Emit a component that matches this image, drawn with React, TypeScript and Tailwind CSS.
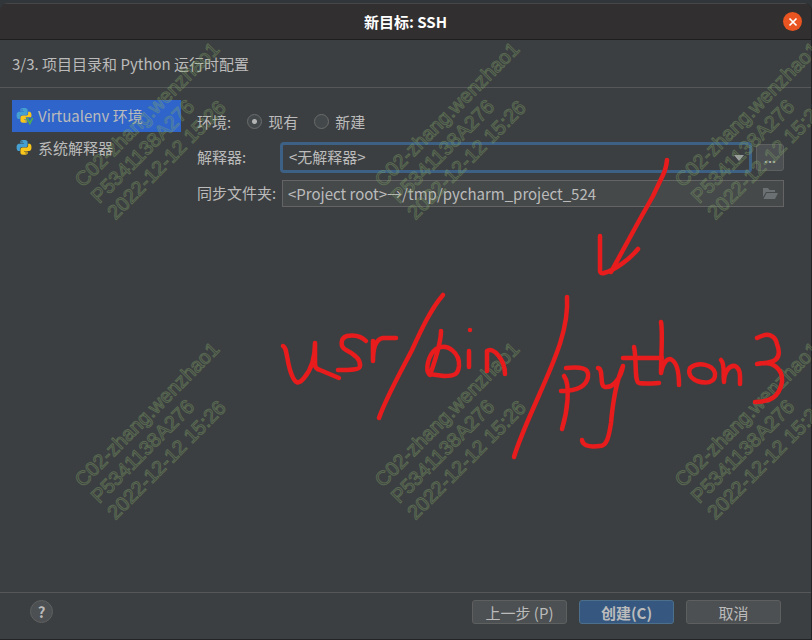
import type { ReactNode } from "react";

const PY_BLUE =
  "M14.25.18l.9.2.73.26.59.3.45.32.34.34.25.34.16.33.1.3.04.26.02.2-.01.13V8.5l-.05.63-.13.55-.21.46-.26.38-.3.31-.33.25-.35.19-.35.14-.33.1-.3.07-.26.04-.21.02H8.77l-.69.05-.59.14-.5.22-.41.27-.33.32-.27.35-.2.36-.15.37-.1.35-.07.32-.04.27-.02.21v3.06H3.17l-.21-.03-.28-.07-.32-.12-.35-.18-.36-.26-.36-.36-.35-.46-.32-.59-.28-.73-.21-.88-.14-1.05-.05-1.23.06-1.22.16-1.04.24-.87.32-.71.36-.57.4-.44.42-.33.42-.24.4-.16.36-.1.32-.05.24-.01h.16l.06.01h8.16v-.83H6.18l-.01-2.75-.02-.37.05-.34.11-.31.17-.28.25-.26.31-.23.38-.2.44-.18.51-.15.58-.12.64-.1.71-.06.77-.04.84-.02 1.27.05zm-6.3 1.98l-.23.33-.08.41.08.41.23.34.33.22.41.09.41-.09.33-.22.23-.34.08-.41-.08-.41-.23-.33-.33-.22-.41-.09-.41.09z";
const PY_YELLOW =
  "M21.1 6.11l.28.06.32.12.35.18.36.27.36.35.35.47.32.59.28.73.21.88.14 1.04.05 1.23-.06 1.23-.16 1.04-.24.86-.32.71-.36.57-.4.45-.42.33-.42.24-.4.16-.36.09-.32.05-.24.02-.16-.01h-8.22v.82h5.84l.01 2.76.02.36-.05.34-.11.31-.17.29-.25.25-.31.24-.38.2-.44.17-.51.15-.58.13-.64.09-.71.07-.77.04-.84.01-1.27-.04-1.07-.14-.9-.2-.73-.25-.59-.3-.45-.33-.34-.34-.25-.34-.16-.33-.1-.3-.04-.25-.02-.2.01-.13v-5.34l.05-.64.13-.54.21-.46.26-.38.3-.32.33-.24.35-.2.35-.14.33-.1.3-.06.26-.04.21-.02.13-.01h5.84l.69-.05.59-.14.5-.21.41-.28.33-.32.27-.35.2-.36.15-.36.1-.35.07-.32.04-.28.02-.21V6.07h2.09l.14.01zm-6.47 14.25l-.23.33-.08.41.08.41.23.33.33.23.41.08.41-.08.33-.23.23-.33.08-.41-.08-.41-.23-.33-.33-.23-.41-.08-.41.08z";

function PythonIcon({ venv = false }: { venv?: boolean }) {
  return (
    <svg viewBox="-1 0 26 26" className="size-4 shrink-0 overflow-visible" aria-hidden="true">
      <path d={PY_BLUE} fill="#459fd0" />
      <path d={PY_YELLOW} fill="#f8c61a" />
      {venv && (
        <>
          <path d="M14.500 15H27v10h-8z" fill="#2f65ca" />
          <path d="M17 16l4.500 9L26 16" fill="none" stroke="#4fb04a" strokeWidth="2.600" />
        </>
      )}
    </svg>
  );
}

function SidebarItem({ label, selected = false }: { label: string; selected?: boolean }) {
  return (
    <button
      type="button"
      className={`flex h-8 w-full items-center gap-1.5 pl-1 text-left whitespace-nowrap ${selected ? "bg-[#2f65ca]" : ""}`}
    >
      <PythonIcon venv={selected} />
      {label}
    </button>
  );
}

function RadioOption({ label, checked = false }: { label: string; checked?: boolean }) {
  return (
    <label className="flex items-center gap-1.5">
      <input
        type="radio"
        name="environment"
        defaultChecked={checked}
        className="size-[15px] appearance-none rounded-full border border-[#6b6b6b] bg-[#43494a] checked:bg-[radial-gradient(circle,#b4b4b4_2px,#43494a_3px)]"
      />
      {label}
    </label>
  );
}

function DialogButton({ children, primary = false }: { children: ReactNode; primary?: boolean }) {
  return (
    <button
      type="button"
      className={`flex h-6 w-[95px] items-center justify-center rounded-[3px] border pt-0.5 whitespace-nowrap ${
        primary ? "border-[#4c708c] bg-[#365880] font-bold" : "border-[#5e6060] bg-[#4c5052]"
      }`}
    >
      {children}
    </button>
  );
}

const STAMPS = [
  [83, 188],
  [383, 188],
  [683, 188],
  [83, 488],
  [383, 488],
  [683, 488],
];

const STROKES = [
  // arrow
  "M667 160Q666 169 663 175L653 196 640 219 611 272",
  "M600 236V271Q600 274 604 273C615 270 630 259 638 249",
  // usr
  "M283 346C287 348 286 356 290 370C295 386 299 384 304 378C311 370 315 360 315 343V364Q315 369 320 370L339 378",
  "M366 341C361 336 353 335 347 336C340 338 340 347 346 350C354 354 361 359 360 366C360 370 350 370 338 370",
  "M373 341V361M373 361C373 348 376 339 383 338H396",
  // slash
  "M443 295C431 309 422 328 412 350C399 375 386 398 379 418",
  // bin
  "M441 331C441 343 436 358 430 375C424 370 429 354 436 349C448 342 460 354 459 366C458 375 454 376 444 376L429 374",
  "M469 351V367M470 330V330",
  "M487 371V351C493 346 505 360 505 374",
  // slash
  "M567 297C569 329 554 361 540 393C530 416 520 437 514 457",
  // python3
  "M564 376C571 385 567 413 562 429M566 368C579 367 590 367 588 377C586 388 574 391 561 391",
  "M598 368C604 369 599 386 605 387C614 388 621 377 623 366C616 382 613 400 611 423C609 436 607 446 600 446C592 447 583 447 582 440",
  "M634 347C637 360 634 381 639 383Q644 384 659 383M623 358H662",
  "M661 322C663 333 661 355 661 373C663 362 668 357 672 360C678 364 679 374 679 385",
  "M690 368C699 361 713 365 715 373C716 383 706 384 697 381C690 378 688 373 690 368",
  "M721 360C725 364 723 373 724 382C724 371 730 365 735 366C741 369 740 376 740 384",
  "M757 338C768 332 775 335 777 344C783 360 774 363 757 364C774 360 783 370 782 382C779 398 769 402 755 402",
];

export default function App() {
  return (
    <div className="relative flex min-h-screen flex-col overflow-hidden bg-[#30363a] pt-[3px] font-['Noto_Sans_CJK_SC',sans-serif] text-[15px] leading-6 text-[#bbbbbb]">
      <div className="flex grow flex-col overflow-hidden rounded-t-lg border-r border-b border-[#222425] bg-[#3c3f41]">
        <header className="flex h-[37px] shrink-0 items-center border-t border-b border-t-[#484748] border-b-[#1e1e1e] bg-[#312f2f] px-[9px]">
          <span className="w-[19px]" />
          <h1 className="grow text-center font-bold text-white">新目标: SSH</h1>
          <button type="button" aria-label="关闭" className="flex size-[19px] items-center justify-center rounded-full bg-[#e95420]">
            <svg viewBox="0 0 10 10" className="size-2.5" aria-hidden="true">
              <path d="M1.500 1.500l7 7M8.500 1.500l-7 7" stroke="#fff" strokeWidth="1.700" />
            </svg>
          </button>
        </header>

        <div className="flex h-12 shrink-0 items-center border-b border-[#555758] px-3">3/3. 项目目录和 Python 运行时配置</div>

        <main className="flex grow gap-4 pt-3 pr-[27px] pl-3">
          <nav className="w-[169px] shrink-0">
            <SidebarItem label="Virtualenv 环境" selected />
            <SidebarItem label="系统解释器" />
          </nav>

          <form className="flex min-w-0 grow flex-col">
            <div className="flex h-[41px] items-center gap-4 pt-0.5" role="radiogroup" aria-label="环境">
              <span>环境:</span>
              <RadioOption label="现有" checked />
              <RadioOption label="新建" />
            </div>
            <div className="flex h-8 items-center">
              <label htmlFor="interpreter" className="w-[83px] shrink-0">
                解释器:
              </label>
              <div className="relative min-w-0 grow">
                <select
                  id="interpreter"
                  className="block h-[31px] w-full appearance-none rounded-[4px] border-[3px] border-[#3d6185] bg-[#3c3f41] pl-1.5 outline-none"
                >
                  <option>&lt;无解释器&gt;</option>
                </select>
                <svg viewBox="0 0 10 6" className="pointer-events-none absolute top-[13px] right-2 h-1.5 w-2.5" aria-hidden="true">
                  <path d="M0 0h10L5 6z" fill="#9da0a2" />
                </svg>
              </div>
              <button type="button" aria-label="浏览解释器" className="ml-1 flex h-[27px] w-7 shrink-0 items-center justify-center rounded-[3px] border border-[#5e6060] bg-[#4c5052]">
                ...
              </button>
            </div>
            <div className="mt-1.5 flex h-7 items-center">
              <label htmlFor="sync-folder" className="w-[85px] shrink-0 whitespace-nowrap">
                同步文件夹:
              </label>
              <div className="flex h-[27px] min-w-0 grow items-center border border-[#646464] bg-[#45494a] pr-[5px]">
                <input
                  id="sync-folder"
                  type="text"
                  readOnly
                  defaultValue="<Project root>→/tmp/pycharm_project_524"
                  className="min-w-0 grow bg-transparent pt-px pl-[5px] outline-none"
                />
                <svg viewBox="0 0 16 14" className="h-3.5 w-4 shrink-0" aria-hidden="true">
                  <path d="M1 11V2h5l1.500 2H13v2H4z" fill="#6b7073" />
                  <path d="M4.500 7H16l-3 6H1.500z" fill="#6b7073" />
                </svg>
              </div>
            </div>
          </form>
        </main>

        <footer className="flex h-[47px] shrink-0 items-start justify-between border-t border-[#555758] pt-[7px] pr-[30px] pl-[30px]">
          <button type="button" aria-label="帮助" className="flex size-[23px] items-center justify-center rounded-full border border-[#5e6060] bg-[#4c5052] font-bold">
            ?
          </button>
          <div className="flex gap-3">
            <DialogButton>上一步 (P)</DialogButton>
            <DialogButton primary>创建(C)</DialogButton>
            <DialogButton>取消</DialogButton>
          </div>
        </footer>
      </div>

      <svg width="812" height="640" viewBox="0 0 812 640" className="pointer-events-none absolute top-0 left-0">
        <g fill="none" stroke="#82a568" strokeOpacity="0.42" strokeWidth="1" fontSize="20" className="font-['Liberation_Sans',sans-serif]">
          {STAMPS.map(([x, y]) => (
            <g key={`${x}-${y}`} transform={`translate(${x} ${y}) rotate(-45)`}>
              <text>C02-zhang.wenzhao1</text>
              <text y="23">P5341138A276</text>
              <text y="46">2022-12-12 15:26</text>
            </g>
          ))}
        </g>
        <g fill="none" stroke="#e81c1c" strokeWidth="4.5" strokeLinecap="round" strokeLinejoin="round">
          {STROKES.map((d) => (
            <path key={d} d={d} />
          ))}
        </g>
      </svg>
    </div>
  );
}
